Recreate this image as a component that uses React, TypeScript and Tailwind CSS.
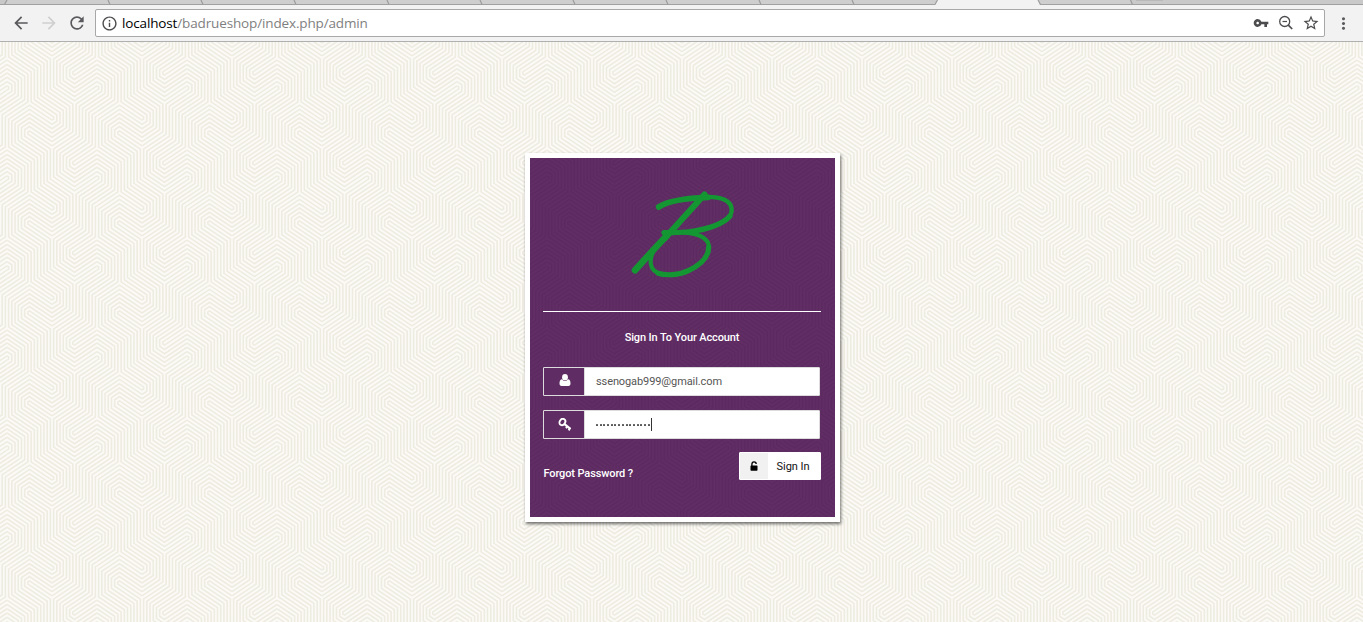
import React from "react";
import {
  MdArrowBack,
  MdArrowForward,
  MdInfoOutline,
  MdMoreVert,
  MdRefresh,
  MdStarBorder,
  MdVpnKey,
} from "react-icons/md";

const TURNS = 7;
const STEP = 22.5 / TURNS;
const S = 2 / 3;

/** Line work of one 90x90 tile: interlocking hexagonal spirals. */
function tileLines(): string {
  const out: string[] = [];
  const add = (...pts: number[][]) =>
    out.push("M" + pts.map((p) => p.map((n) => +n.toFixed(2)).join(" ")).join("L"));
  for (let i = 0; i < TURNS; i++) {
    const r = i * STEP + STEP / 2;
    const x = 22.5 + r;
    add([0, 30 - 2 * S * r], [r, 30 - S * r], [r, 30 + S * r], [0, 30 + 2 * S * r]);
    add(
      [45, 90 - 2 * S * r],
      [22.5, 75 - 2 * S * r],
      [22.5 - r, 75 - S * r],
      [22.5 - r, 75 + S * r],
      [22.5, 75 + 2 * S * r],
      [45, 90 + 2 * S * r],
    );
    add(
      [0, 30 - 2 * S * x],
      [x, 30 - S * x],
      [x, 60 - S * x],
      [45 + r, 60 - S * r],
      [45 + r, 60 + S * r],
      [45, 60 + 2 * S * r],
    );
    add(
      [90, -2 * S * r],
      [67.5 - r, 15 - S * r],
      [67.5 - r, 15 + S * r],
      [67.5, 15 + 2 * S * r],
      [90, 2 * S * r],
    );
    add(
      [90, 30 + 2 * S * r],
      [67.5 + r, 45 + S * r],
      [67.5 + r, 75 + S * r],
      [45, 90 + 2 * S * r],
    );
  }
  return out.join("");
}

const LINES = tileLines();

function Texture({ id, color, x, y }: { id: string; color: string; x: number; y: number }) {
  return (
    <svg className="absolute inset-0 h-full w-full" aria-hidden="true">
      <defs>
        <pattern id={id} x={x} y={y} width="90" height="90" patternUnits="userSpaceOnUse">
          <path d={LINES} fill="none" stroke={color} strokeWidth="1.6" />
        </pattern>
      </defs>
      <rect width="100%" height="100%" fill={`url(#${id})`} />
    </svg>
  );
}

function TabStrip() {
  return (
    <svg className="block h-[5px] w-full shrink-0" viewBox="0 0 1363 5" aria-hidden="true">
      <rect width="1363" height="5" fill="#cecece" />
      <path d="M0 0H7L4.500 5H0Z" fill="#c8c8c8" />
      <path d="M1131 0H1363V5H1133Z" fill="#c9c9c9" />
      <rect x="1136" width="27" height="1" fill="#b9b9b9" />
      <path d="M0 4.500H1363" stroke="#a0a0a0" />
      <path d="M937 0H1038L1040 5H935Z" fill="#f2f2f2" />
      <path
        d="M7 0L4.500 4.500M108 0L110 4.500M201 0L203 4.500M294 0L296 4.500M387 0L389 4.500M480 0L482 4.500M573 0L575 4.500M666 0L668 4.500M759 0L761 4.500M852 0L854 4.500M937.500 0L935 4.500M1038 0L1040.500 4.500M1130.500 0L1132.500 4.500"
        fill="none"
        stroke="#9c9c9c"
        strokeWidth="1.2"
      />
    </svg>
  );
}

function ZoomOutIcon() {
  return (
    <svg width="16" height="16" viewBox="0 0 16 16" fill="none" stroke="#4c4c4f">
      <circle cx="6.700" cy="6.500" r="5" strokeWidth="1.300" />
      <path d="M4.500 6.500H9" strokeWidth="1.200" />
      <path d="M10.300 10.200L14.200 14" strokeWidth="1.700" />
    </svg>
  );
}

function Toolbar() {
  return (
    <div className="flex h-[37px] shrink-0 items-center border-b border-[#b0b0b0] bg-[#f2f2f2] pl-[11px]">
      <MdArrowBack className="size-5 text-[#5a5a5e]" />
      <MdArrowForward className="ml-2 size-5 text-[#cfcfd0]" />
      <MdRefresh className="ml-[8px] size-[20px] text-[#5a5a5e]" />
      <div className="ml-[8px] flex h-7 w-[1230px] items-center rounded-[2px] border border-[#a8a8a8] bg-white pl-[5px] pr-1">
        <MdInfoOutline className="size-[17px] text-[#4c4c4f]" />
        <div className="ml-1 grow whitespace-nowrap font-['Open_Sans','Noto_Sans',sans-serif] text-[13.500px] leading-[18px] tracking-[-0.140px] text-[#808080]">
          <span className="text-black">localhost</span>/badrueshop/index.php/admin
        </div>
        <MdVpnKey className="mb-px mr-[9px] size-4 text-[#4c4c4f]" />
        <ZoomOutIcon />
        <MdStarBorder className="ml-[8px] size-[18px] text-[#4c4c4f]" />
      </div>
      <MdMoreVert className="ml-[9px] size-[19px] text-[#5a5a5e]" />
    </div>
  );
}

function Logo() {
  return (
    <svg
      className="block"
      width="110"
      height="95"
      viewBox="628 187 110 95"
      fill="none"
      stroke="#149632"
      strokeLinecap="round"
      strokeLinejoin="round"
    >
      <path d="M704.500 194.500L665 238" strokeWidth="6.200" />
      <path d="M666 236.500C654 249 645 259 635 270.300" strokeWidth="6.600" />
      <path d="M658.700 207C669 200.500 690 198 708 197.400" strokeWidth="5.800" />
      <path d="M704 197C722 196.200 731.700 201 731.700 210C731.700 219 720 225 701 230" strokeWidth="4.400" />
      <path d="M730 216C723 224.500 705 229.500 689 231.800C681 232.900 672 232.500 664 232.500" strokeWidth="5.200" />
      <path d="M664 232.500C683 231.500 700 233.500 706 240C708.500 242.500 709.300 245 709 249" strokeWidth="4.200" />
      <path d="M708.700 247C708.700 258 699 265.500 689 270.300C679 275.200 666 275.800 658 273.200" strokeWidth="5.200" />
      <path d="M661 274.200C649 271 648 260 655 248.500" strokeWidth="4.200" />
    </svg>
  );
}

function UserIcon() {
  return (
    <svg className="mb-[3px] ml-px" width="12" height="12" viewBox="0 0 12 12" fill="#fff">
      <ellipse cx="6" cy="3.300" rx="2.900" ry="3.300" />
      <path d="M3.200 5.200C4 6.600 5 7 6 7S8 6.600 8.800 5.200C10.800 5.300 11.500 7 11.500 9.500C11.500 11 10.800 12 9.500 12H2.500C1.200 12 .5 11 .5 9.500C.5 7 1.200 5.300 3.200 5.200Z" />
    </svg>
  );
}

function KeyIcon() {
  return (
    <svg className="mb-px ml-px" width="14" height="13" viewBox="0 0 14 13" fill="none" stroke="#fff">
      <ellipse cx="4.400" cy="4" rx="2.700" ry="3.300" transform="rotate(35 4.400 4)" strokeWidth="1.900" />
      <path d="M6.300 5.800L12.300 10.800" strokeWidth="2.200" />
      <path d="M9.400 8.200L8 10.200M12.400 9.800L10.600 12.400" strokeWidth="1.900" />
    </svg>
  );
}

function UnlockIcon() {
  return (
    <svg width="8" height="10" viewBox="0 0 8 10">
      <path d="M1.900 5V3.200C1.900 1.700 2.800.8 4 .8S6.200 1.700 6.200 3" fill="none" stroke="#000" strokeWidth="1.300" />
      <rect x=".5" y="4.400" width="7" height="5.300" rx=".7" fill="#000" />
    </svg>
  );
}

function Field({ icon, children }: { icon: React.ReactNode; children: React.ReactNode }) {
  return (
    <div className="flex h-[29px] w-[277px] rounded-[1px] border border-[#dcdcdc] bg-white">
      <div className="flex w-[41px] items-center justify-center border-r border-[#dcdcdc] bg-[#5f2c64]">
        {icon}
      </div>
      <div className="flex grow items-center pl-[11px] text-[#555]">{children}</div>
    </div>
  );
}

function LoginCard() {
  return (
    <div className="relative h-[369px] w-[315px] border-[5px] border-white bg-[#602d65] shadow-[1px_2px_3px_rgba(0,0,0,0.55)]">
      <Texture id="card-texture" color="rgba(50,10,50,0.08)" x={17} y={-10} />
      <div className="relative flex h-full flex-col px-[13px] font-['Roboto',sans-serif] text-[11px]">
        <div className="mr-px flex h-[154px] justify-center border-b border-white pl-[2px] pt-[29px]">
          <Logo />
        </div>
        <h1 className="mr-px mt-[18px] text-center text-[11px] font-medium leading-4 tracking-[-0.120px] text-white">
          Sign In To Your Account
        </h1>
        <form className="mt-[21px] flex flex-col" onSubmit={(e) => e.preventDefault()}>
          <Field icon={<UserIcon />}>
            <span className="pt-px text-[11px] leading-4 tracking-[-0.100px]">ssenogab999@gmail.com</span>
          </Field>
          <div className="mt-[14px]">
            <Field icon={<KeyIcon />}>
              <span className="flex gap-[1.700px]">
                {Array.from({ length: 15 }, (_, i) => (
                  <span key={i} className="size-[2px] rounded-[0.500px] bg-[#555]" />
                ))}
              </span>
              <span className="ml-px h-[13px] w-px bg-[#333]" />
            </Field>
          </div>
          <div className="mt-[13px] flex w-[278px] justify-between">
            <a className="mt-[14px] pl-[0.500px] font-medium leading-4 tracking-[-0.120px] text-white">
              Forgot Password ?
            </a>
            <button
              type="button"
              className="flex h-7 w-[82px] rounded-[1px] border border-white bg-white text-[11px] text-[#111]"
            >
              <span className="flex h-full w-[28px] items-center justify-center bg-[#f1f1f1]">
                <UnlockIcon />
              </span>
              <span className="flex h-full grow items-center justify-center pr-[2px] pt-[2px] tracking-[-0.050px]">
                Sign In
              </span>
            </button>
          </div>
        </form>
      </div>
    </div>
  );
}

export default function App() {
  return (
    <div className="flex h-[622px] w-[1363px] flex-col overflow-hidden bg-[#fbfaf6]">
      <TabStrip />
      <Toolbar />
      <main className="relative flex grow justify-center pl-[2px] pt-[111px]">
        <Texture id="page-texture" color="#eeece1" x={7} y={16} />
        <LoginCard />
      </main>
    </div>
  );
}
